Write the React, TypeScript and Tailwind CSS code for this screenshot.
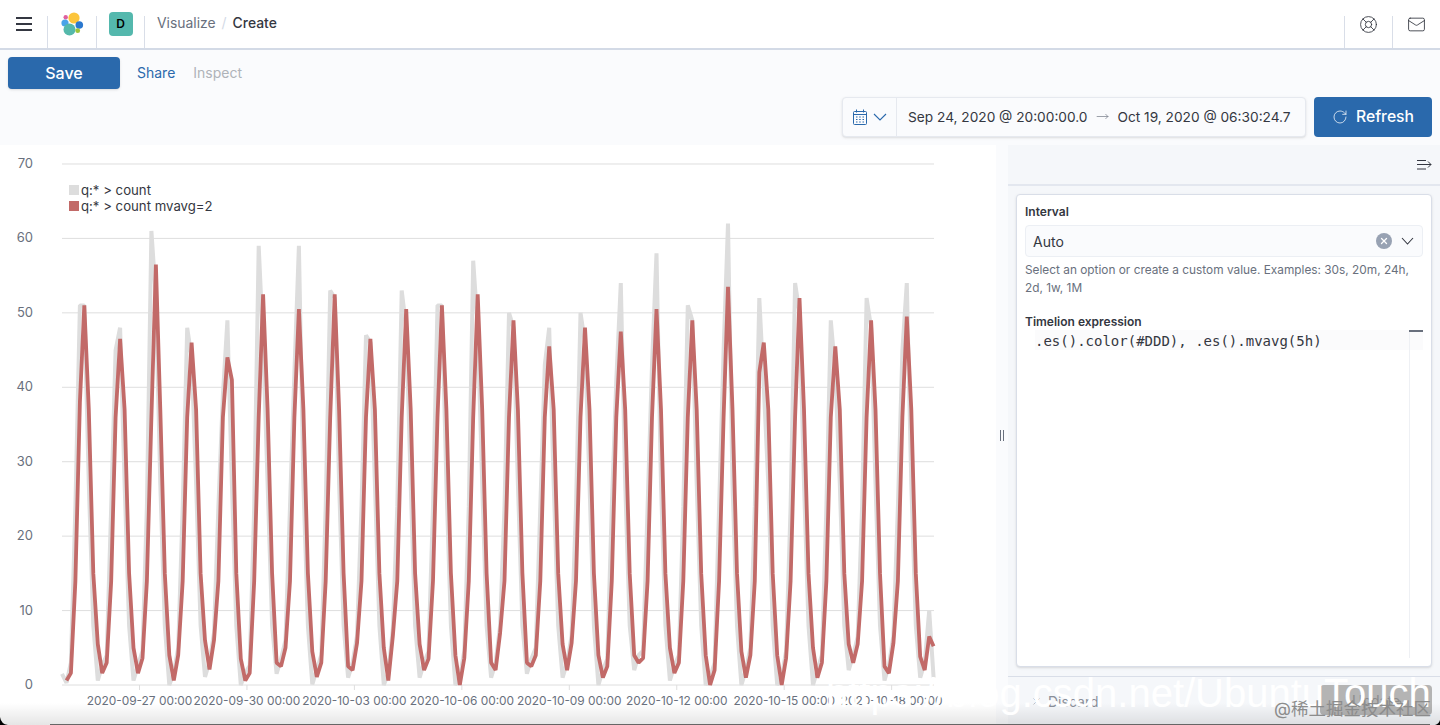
import React from "react";
import { LifeBuoy, Mail, RotateCw, MoveRight, X } from "lucide-react";

// one row per daily peak: red peak, trough after it, point before and after the trough, gray at peak-1 and at peak
const days: number[][] = [
  [51, 1.6, 5.5, 3, 51, 51],
  [46.5, 1.6, 5, 3.6, 45, 48],
  [56.5, 0.6, 4, 4, 61, 52],
  [46, 2.1, 6, 6, 48, 44],
  [44, 0.6, 3.5, 1.6, 39, 49],
  [52.5, 2.5, 3, 5, 59, 46],
  [50.5, 1.1, 4.5, 3, 42, 59],
  [52.5, 2, 2.5, 5.6, 53, 52],
  [46.5, 0.6, 5, 6.5, 47, 46],
  [50.5, 2, 5.5, 3.5, 53, 48],
  [51, 0, 4, 3.6, 51, 51],
  [52.5, 2, 3, 7, 57, 48],
  [49, 2.5, 3, 4, 50, 48],
  [45.5, 2, 5.5, 5.6, 43, 48],
  [48, 1, 4, 2.5, 50, 46],
  [47.5, 3, 4, 3.6, 41, 54],
  [50.5, 1.6, 5, 3, 43, 58],
  [49, 0, 4, 2, 51, 49],
  [53.5, 1, 4.5, 4, 45, 62],
  [46, 0, 4, 3.6, 52, 40],
  [52, 1, 5, 3, 54, 50],
  [45.5, 3, 5.5, 5.5, 49, 42],
  [49, 1.6, 2.5, 5.6, 52, 48],
  [49.5, 2, 3.8, 6.5, 45, 54],
];

const red: number[] = new Array(196).fill(0);
const gray: number[] = new Array(196).fill(0);
red[1] = 0.6; red[2] = 1.6; red[3] = 14; red[4] = 38;
gray[0] = 1.5; gray[1] = 0.3; gray[2] = 3; gray[3] = 24;
days.forEach(([peak, low, pre, post, g0, g1], k) => {
  const r = 5 + 8 * k;
  red[r] = peak;
  red[r + 1] = 37;
  red[r + 2] = 15;
  red[r + 3] = pre;
  red[r + 4] = low;
  red[r + 5] = post;
  red[r + 6] = 14;
  red[r + 7] = 36;
  gray[r - 1] = g0;
  gray[r] = g1;
  gray[r + 1] = 27;
  gray[r + 2] = 8;
  gray[r + 3] = Math.max(0, low - 1);
  gray[r + 4] = low + 1;
  gray[r + 5] = post + 1;
  gray[r + 6] = 24;
});
red[38] = 41;
red[156] = 42;
red[194] = 6.5;
red[195] = 5.2;
gray[194] = 10;
gray[195] = 1;

const px = (i: number) => 62 + 4.47 * i;
const py = (v: number) => 685 - 7.443 * v;
const line = (data: number[], from: number) =>
  data
    .slice(from, 196)
    .map((v, i) => `${px(i + from).toFixed(1)},${py(v).toFixed(1)}`)
    .join(" ");

const ticks = ["09-27", "09-30", "10-03", "10-06", "10-09", "10-12", "10-15", "10-18"];

const Chev = ({ w = 14 }: { w?: number }) => (
  <svg width={w} height="8" viewBox={`0 0 ${w} 8`} fill="none" stroke="currentColor" strokeWidth="1.1">
    <path d={`M1 1l${w / 2 - 1} 6 ${w / 2 - 1}-6`} />
  </svg>
);

const Chart = () => (
  <div className="relative w-[996px] bg-white">
    <svg width="996" height="580" viewBox="0 145 996 580" className="block">
      {[0, 10, 20, 30, 40, 50, 60, 70].map((v) => (
        <g key={v}>
          <line x1="62" x2="934" y1={py(v)} y2={py(v)} stroke="#dedede" strokeWidth="1" />
          <text x="33" y={py(v) + 4} textAnchor="end" fontSize="13" fill="#69707d">
            {v}
          </text>
        </g>
      ))}
      {ticks.map((t, i) => (
        <g key={t}>
          <line x1={139.5 + 107.45 * i} x2={139.5 + 107.45 * i} y1="685" y2="690" stroke="#dedede" />
          <text x={139.5 + 107.45 * i} y="704.5" textAnchor="middle" fontSize="11.9" fill="#69707d">
            {`2020-${t} 00:00`}
          </text>
        </g>
      ))}
      <polyline points={line(gray, 0)} fill="none" stroke="#dddddd" strokeWidth="4" strokeLinejoin="bevel" />
      <polyline points={line(red, 1)} fill="none" stroke="#c26a68" strokeWidth="3.8" strokeLinejoin="bevel" />
    </svg>
    <div className="absolute left-[69px] top-[37px] text-[13.2px] leading-[16px] text-[#343741]">
      <div className="flex items-center gap-[2px]">
        <span className="h-[10px] w-[10px] bg-[#dddddd]" />
        q:* &gt; count
      </div>
      <div className="flex items-center gap-[2px]">
        <span className="h-[10px] w-[10px] bg-[#c26a68]" />
        q:* &gt; count mvavg=2
      </div>
    </div>
  </div>
);

const Logo = () => (
  <svg width="26" height="26" viewBox="0 0 26 26">
    <circle cx="15" cy="7" r="5.6" fill="#fcc53c" />
    <circle cx="6.7" cy="6.3" r="2.2" fill="#e0609e" />
    <circle cx="6" cy="12" r="3.6" fill="#4aa3e8" />
    <circle cx="10.5" cy="18.5" r="6" fill="#55b9ab" />
    <circle cx="20.3" cy="14" r="3.8" fill="#2b78cf" />
    <circle cx="18.7" cy="19.7" r="2.4" fill="#9dc43c" />
  </svg>
);

const Divider = () => <div className="mt-[16px] h-[32px] w-px bg-[#d9dee8]" />;

const App = () => {
  return (
    <div className="relative h-[725px] w-[1440px] overflow-hidden bg-[#fafbfd] font-['Inter',sans-serif] text-[#343741]">
      <header className="flex h-[50px] items-start border-b-2 border-[#d3dae6] bg-white">
        <div className="flex h-[48px] w-[47px] items-center justify-center">
          <span className="flex w-[16px] flex-col gap-[4px]">
            <span className="h-[2px] bg-[#343741]" />
            <span className="h-[2px] bg-[#343741]" />
            <span className="h-[2px] bg-[#343741]" />
          </span>
        </div>
        <Divider />
        <div className="flex h-[48px] w-[48px] items-center justify-center">
          <Logo />
        </div>
        <Divider />
        <div className="flex h-[48px] w-[47px] items-center justify-center">
          <span className="flex h-[24px] w-[24px] items-center justify-center rounded bg-[#54b8ad] text-[12px] font-semibold text-black">
            D
          </span>
        </div>
        <Divider />
        <nav className="ml-[12px] flex h-[48px] items-center pb-[1px] text-[13.9px]">
          <span className="text-[#69707d]">Visualize</span>
          <span className="mx-[6px] text-[#d3dae6]">/</span>
          <span className="font-medium">Create</span>
        </nav>
        <div className="ml-auto flex">
          <Divider />
          <div className="flex h-[48px] w-[47px] items-center justify-center">
            <LifeBuoy size={19} strokeWidth={1.1} />
          </div>
          <Divider />
          <div className="flex h-[48px] w-[47px] items-center justify-center">
            <Mail size={19} strokeWidth={1.1} />
          </div>
        </div>
      </header>

      <section className="h-[95px]">
        <div className="flex items-center px-[8px] pt-[7px]">
          <button className="h-[32px] w-[112px] rounded bg-[#2a69ac] pb-[1px] text-[16px] font-medium text-white shadow-sm">
            Save
          </button>
          <span className="ml-[17px] pb-[1px] text-[14px] text-[#2a69ac]">Share</span>
          <span className="ml-[18px] pb-[1px] text-[14px] text-[#afb3b9]">Inspect</span>
        </div>
        <div className="mt-[8px] flex justify-end pr-[8px]">
          <div className="flex h-[40px] w-[464px] items-center rounded-sm border border-[#e6e9ef] bg-[#fafbfd] shadow-sm">
            <div className="flex h-full w-[54px] items-center justify-center gap-[6px] border-r border-[#e6e9ef] text-[#2a69ac]">
              <svg width="14" height="16" viewBox="0 0 14 16" fill="none" stroke="#2a69ac" strokeWidth="1">
                <rect x="0.5" y="2.5" width="13" height="13" rx="1" />
                <path d="M.5 5.5h13M3.5 .5v3M10.5 .5v3" />
                <path d="M3 8h1.5M6.2 8h1.5M9.5 8H11M3 10.5h1.5M6.2 10.5h1.5M9.5 10.5H11M3 13h1.5M6.2 13h1.5M9.5 13H11" />
              </svg>
              <Chev w={14} />
            </div>
            <div className="flex flex-1 items-center whitespace-nowrap pl-[11px] text-[13.7px]">
              <span>Sep 24, 2020 @ 20:00:00.0</span>
              <MoveRight size={13} strokeWidth={1.2} className="ml-[9px] mr-[8px] text-[#69707d]" />
              <span>Oct 19, 2020 @ 06:30:24.7</span>
            </div>
          </div>
          <button className="ml-[8px] flex h-[40px] w-[118px] items-center justify-center gap-[8px] rounded bg-[#2a69ac] text-[15.7px] font-medium text-white">
            <RotateCw size={16} strokeWidth={1.1} />
            Refresh
          </button>
        </div>
      </section>

      <main className="flex h-[580px]">
        <Chart />
        <div className="flex w-[12px] items-center justify-center">
          <span className="h-[11px] w-[4px] border-x border-[#69707d]" />
        </div>
        <aside className="flex h-full flex-1 flex-col bg-[#f5f7fa]">
          <div className="flex h-[41px] items-center justify-end border-b-2 border-[#e3e7ef] pr-[8px]">
            <svg width="16" height="12" viewBox="0 0 16 12" fill="none" stroke="#343741" strokeWidth="1">
              <path d="M1 1.5h9M1 5.5h14M1 10h9M12 2.5l3 3-3 3" />
            </svg>
          </div>
          <div className="mx-[8px] mt-[8px] flex h-[473px] flex-col rounded border border-[#d9dee8] bg-white px-[8px] pt-[9px] shadow-sm">
            <label className="text-[12px] font-semibold leading-[16px]">Interval</label>
            <div className="mt-[5px] flex h-[32px] items-center rounded-sm border border-[#eceff4] bg-[#fafbfd] pl-[7px] pr-[8px] text-[14px]">
              Auto
              <span className="ml-auto flex h-[16px] w-[16px] items-center justify-center rounded-full bg-[#98a2b3] text-white">
                <X size={10} strokeWidth={3} />
              </span>
              <span className="ml-[9px] flex">
                <Chev w={13} />
              </span>
            </div>
            <p className="mt-[4px] text-[11.85px] leading-[18px] text-[#69707d]">
              Select an option or create a custom value. Examples: 30s, 20m, 24h, 2d, 1w, 1M
            </p>
            <label className="mt-[17px] text-[12px] font-semibold leading-[16px]">Timelion expression</label>
            <div className="relative flex-1">
              <div className="ml-[10px] flex h-[20px] items-center bg-[#fbfbfc] pt-[2px] font-['DejaVu_Sans_Mono',monospace] text-[14px]">
                .es().color(#DDD), .es().mvavg(5h)
              </div>
              <div className="absolute bottom-[8px] right-[13px] top-0 w-[1px] bg-[#eef0f4]" />
              <div className="absolute right-0 top-0 h-[2px] w-[14px] bg-[#69707d]" />
            </div>
          </div>
          <div className="mt-[9px] flex flex-1 items-start border-t border-[#d9dee8] pl-[23px] pt-[14px] text-[14px] text-[#8a8f99]">
            <X size={11} strokeWidth={1.2} className="mr-[6px] mt-[5px]" />
            Discard
          </div>
        </aside>
      </main>

      {/* screenshot leftovers sitting over the page: update button, window shadow, watermarks */}
      <div className="absolute left-[1320px] top-[685px] flex h-[30px] w-[112px] items-center justify-center rounded bg-[#b4b4b4] text-[14px] text-[#8c8c8c]">
        Update
      </div>
      <div className="pointer-events-none absolute bottom-0 left-0 h-[22px] w-full bg-gradient-to-t from-black/10 to-transparent" />
      <div className="absolute bottom-0 left-[50px] right-[10px] h-px bg-[#666666]" />
      <svg width="8" height="8" viewBox="0 0 8 8" className="absolute bottom-0 left-0">
        <path d="M0 0v8h8Q1 7 0 0z" fill="#000" />
      </svg>
      <svg width="5" height="5" viewBox="0 0 5 5" className="absolute bottom-0 right-0">
        <path d="M5 0v5H0Q4 4 5 0z" fill="#000" />
      </svg>
      <div className="absolute left-[826px] top-[669px] whitespace-nowrap font-['Liberation_Sans',sans-serif] text-[40px] leading-[48px] text-white">
        https://blog.csdn.net/UbuntuTouch
      </div>
      <div className="absolute left-[1274px] top-[698px] whitespace-nowrap font-['Inter','Noto_Sans_CJK_SC',sans-serif] text-[17.5px] leading-[22px] text-[#8c8c8c]">
        @稀土掘金技术社区
      </div>
    </div>
  );
};

export default App;
